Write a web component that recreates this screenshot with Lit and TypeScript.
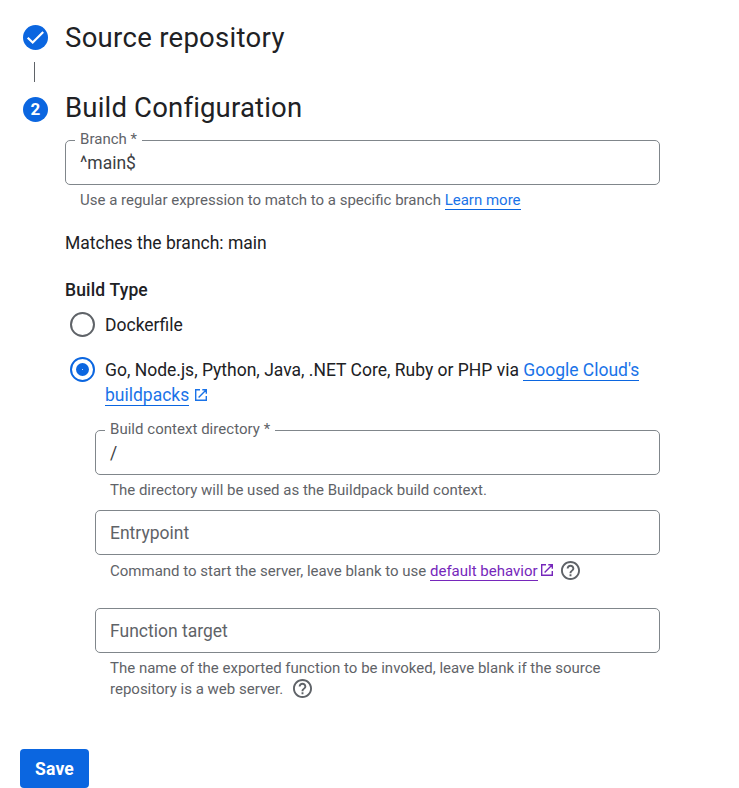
import { LitElement, html, css, svg, nothing } from "lit";
import { customElement, property } from "lit/decorators.js";

const externalIcon = html`<svg class="ext" viewBox="0 0 14 14" aria-hidden="true">
  ${svg`<path d="M6 1.7H1.7V12.3H12.3V8M8.3 1.7H12.3V5.7M12.3 1.7L4.6 9.4" fill="none" stroke="currentColor" stroke-width="1.4"/>`}
</svg>`;

const helpIcon = html`<svg class="help" viewBox="2 2 20 20" aria-hidden="true">
  ${svg`<path fill="currentColor" d="M11 18h2v-2h-2v2zm1-16C6.48 2 2 6.48 2 12s4.48 10 10 10 10-4.48 10-10S17.52 2 12 2zm0 18c-4.41 0-8-3.59-8-8s3.59-8 8-8 8 3.59 8 8-3.59 8-8 8zm0-14c-2.21 0-4 1.79-4 4h2c0-1.1.9-2 2-2s2 .9 2 2c0 2-3 1.75-3 5h2c0-2.25 3-2.5 3-5 0-2.21-1.79-4-4-4z"/>`}
</svg>`;

@customElement("outlined-field")
export class OutlinedField extends LitElement {
  @property() label = "";
  @property() value = "";

  static styles = css`
    :host { display: block; }
    .box {
      position: relative;
      box-sizing: border-box;
      height: 45px;
      padding-left: 14px;
      border: 1px solid #80868b;
      border-radius: 5px;
      font-size: 17.5px;
      line-height: 45px;
      color: #3c4043;
    }
    .empty { color: #5f6368; }
    .label {
      position: absolute;
      left: 9px;
      top: -12px;
      padding: 0 5px;
      background: #fff;
      font-size: 15px;
      line-height: 20px;
      letter-spacing: 0.03px;
      color: #5f6368;
      white-space: pre;
    }
  `;

  render() {
    return html`<div class="box ${this.value ? "" : "empty"}">
      ${this.value ? html`<span class="label">${this.label}</span>` : nothing}${this.value || this.label}
    </div>`;
  }
}

@customElement("app-root")
export class AppRoot extends LitElement {
  static styles = css`
    :host {
      display: block;
      box-sizing: border-box;
      height: 788px;
      overflow: hidden;
      background: #fff;
      color: #202124;
      font-family: Roboto, "Liberation Sans", sans-serif;
      font-size: 17.5px;
      line-height: 25px;
    }
    .step { display: flex; align-items: center; gap: 17px; padding-left: 23px; }
    .first { padding-top: 20px; }
    .second { margin-top: 10px; }
    .dot { width: 25px; height: 25px; flex: none; display: block; }
    .num {
      border-radius: 50%;
      background: #0b66e0;
      color: #fff;
      font-weight: 700;
      font-size: 17px;
      line-height: 25px;
      text-align: center;
    }
    h2 { margin: 0; font-size: 27.5px; line-height: 35px; font-weight: 400; }
    .t1 { letter-spacing: 0.3px; }
    .t2 { letter-spacing: 0.18px; margin: -2px 0 2px; }
    .rail { width: 1px; height: 20px; margin: 7px 0 0 34px; background: #5f6368; }
    .body { margin: 13px 79px 0 65px; }
    .hint {
      margin: 5px 0 0 15px;
      font-size: 15px;
      line-height: 21px;
      color: #5f6368;
      white-space: nowrap;
    }
    .match { margin-top: 20px; }
    .type { margin-top: 22px; font-weight: 500; letter-spacing: 0.16px; }
    .option { display: flex; gap: 10px; padding-left: 5px; }
    .text { padding-top: 1px; margin-bottom: -1px; }
    .docker { margin-top: 9px; }
    .packs { margin-top: 20px; }
    .radio {
      box-sizing: border-box;
      width: 25px;
      height: 25px;
      flex: none;
      border: 2px solid #5f6368;
      border-radius: 50%;
      display: grid;
      place-items: center;
    }
    .on { border-color: #0b66e0; }
    .on::after {
      content: "";
      width: 13px;
      height: 13px;
      border-radius: 50%;
      background: radial-gradient(circle, #c2d9f8 0.5px, #0b66e0 0.6px);
    }
    a { color: #1a73e8; text-decoration: none; box-shadow: 0 1px 0 #0b66e0; }
    .visited { color: #7627bb; box-shadow: 0 1px 0 #7627bb; }
    .ext { width: 14px; height: 14px; color: #1a73e8; margin-left: 5px; vertical-align: -1px; }
    .visited + .ext { color: #7627bb; margin-left: 2px; }
    .help { width: 19px; height: 19px; margin: -4px 0 -4px 4px; vertical-align: 0; }
    .wide { margin-left: 2px; }
    .nested { margin: 23px 0 0 30px; }
    .entry { margin-top: 9px; }
    .target { margin-top: 26px; }
    .command { margin-top: 6px; }
    button {
      display: block;
      width: 69px;
      height: 39px;
      margin: 49px 0 0 20px;
      padding: 0;
      border: 0;
      border-radius: 4px;
      background: #0b66e0;
      color: #fff;
      font: 700 17.5px/40px Roboto, "Liberation Sans", sans-serif;
      letter-spacing: 0.2px;
    }
  `;

  render() {
    return html`
      <div class="step first">
        <svg class="dot" viewBox="0 0 25 25">
          <circle cx="12.5" cy="12.5" r="12.5" fill="#0b66e0" />
          <path d="M4.7 12.8L9.7 17.5L20.2 7" fill="none" stroke="#fff" stroke-width="2.2" />
        </svg>
        <h2 class="t1">Source repository</h2>
      </div>
      <div class="rail"></div>
      <div class="step second">
        <div class="dot num">2</div>
        <h2 class="t2">Build Configuration</h2>
      </div>
      <div class="body">
        <outlined-field label="Branch *" value="^main$"></outlined-field>
        <div class="hint">Use a regular expression to match to a specific branch <a>Learn more</a></div>
        <div class="match">Matches the branch: main</div>
        <div class="type">Build Type</div>
        <div class="option docker"><span class="radio"></span><span class="text">Dockerfile</span></div>
        <div class="option packs">
          <span class="radio on"></span>
          <span class="text">Go, Node.js, Python, Java, .NET Core, Ruby or PHP via <a>Google Cloud's<br />buildpacks</a>${externalIcon}</span>
        </div>
        <div class="nested">
          <outlined-field label="Build context directory *" value="/"></outlined-field>
          <div class="hint">The directory will be used as the Buildpack build context.</div>
          <outlined-field class="entry" label="Entrypoint"></outlined-field>
          <div class="hint command">Command to start the server, leave blank to use <a class="visited">default behavior</a>${externalIcon} ${helpIcon}</div>
          <outlined-field class="target" label="Function target"></outlined-field>
          <div class="hint">The name of the exported function to be invoked, leave blank if the source<br />repository is a web server. <span class="wide">${helpIcon}</span></div>
        </div>
      </div>
      <button>Save</button>
    `;
  }
}
